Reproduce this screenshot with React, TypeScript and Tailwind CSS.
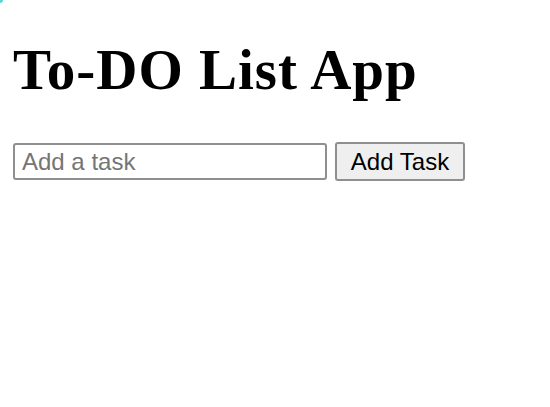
import React, { useState } from 'react';

const App: React.FC = () => {
  const [task, setTask] = useState('');
  const [tasks, setTasks] = useState<string[]>([]);

  const addTask = () => {
    if (!task.trim()) return;
    setTasks([...tasks, task.trim()]);
    setTask('');
  };

  return (
    <div className="relative min-h-[407px] bg-white px-[13px] pt-[37px] font-['Liberation_Serif',serif] text-black">
      {/* corner artifact */}
      <div className="absolute left-0 top-0 h-[3px] w-[3px] rounded-br-full bg-[#5fd3d8]"></div>

      <h1 className="m-0 text-[57px] font-bold leading-[65px] tracking-[1px]">To-DO List App</h1>

      <div className="mt-[40px] flex items-center gap-[8px] font-['Liberation_Sans',Arial,sans-serif]">
        <input
          type="text"
          value={task}
          onChange={(e) => setTask(e.target.value)}
          placeholder="Add a task"
          className="h-[37px] w-[314px] rounded-[3px] border-2 border-[#8f8f8f] bg-white px-[7px] text-[24px] leading-none text-black outline-none placeholder:text-[#757575]"
        />
        <button
          onClick={addTask}
          className="h-[39px] w-[130px] rounded-[3px] border-2 border-[#8f8f8f] bg-[#efefef] text-[24px] leading-none text-black"
        >
          Add Task
        </button>
      </div>

      <ul className="m-0 list-none p-0">
        {tasks.map((t, i) => (
          <li key={i} className="text-[24px]">{t}</li>
        ))}
      </ul>
    </div>
  );
};

export default App;
